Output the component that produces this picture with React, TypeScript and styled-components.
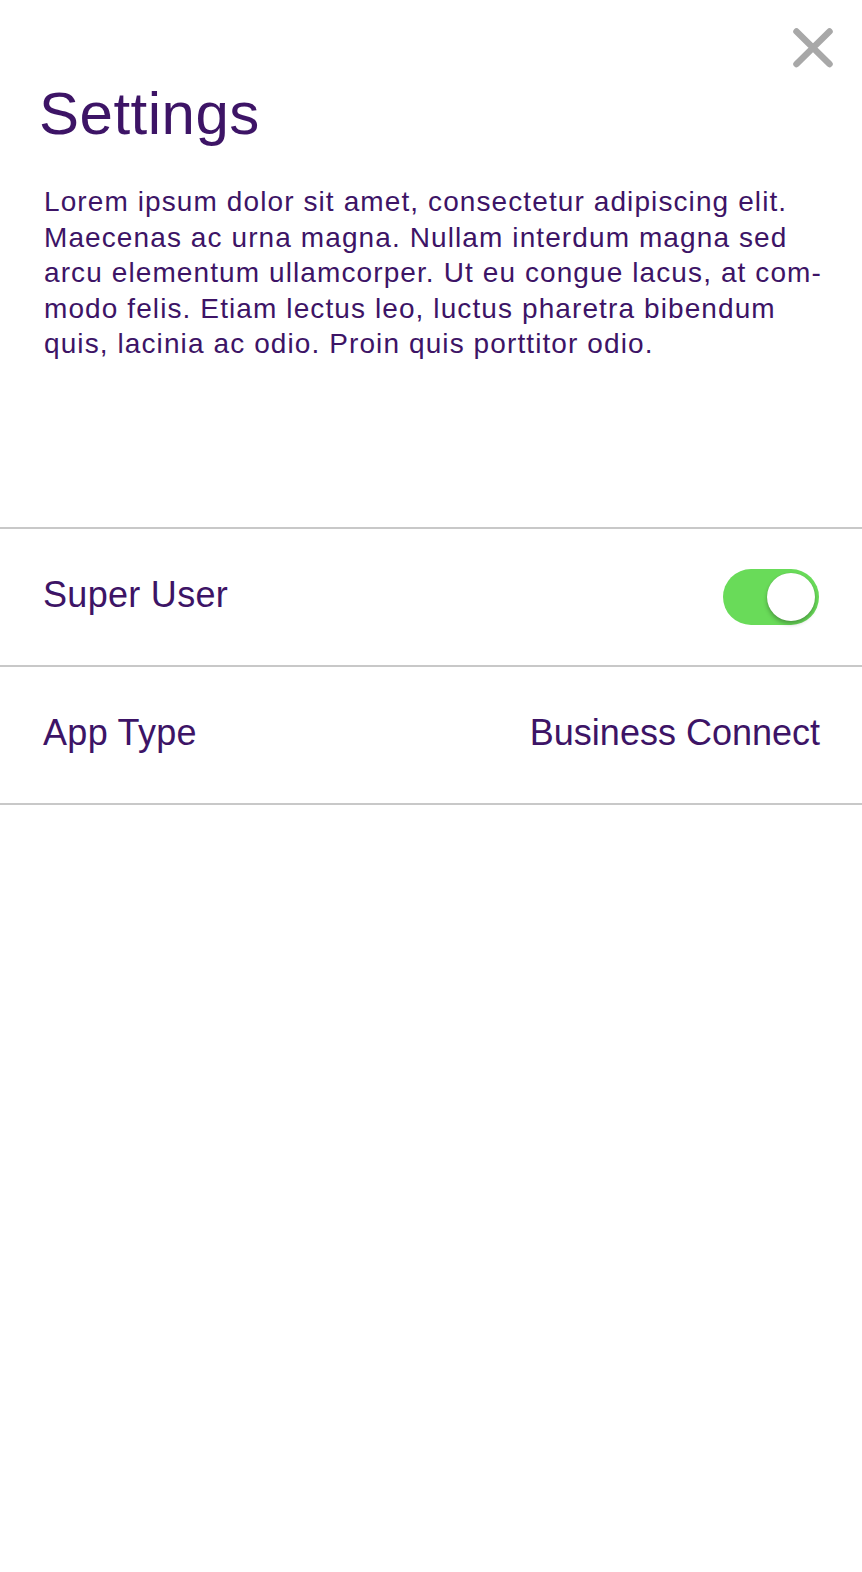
import React from "react";
import styled, { createGlobalStyle } from "styled-components";

const GlobalStyle = createGlobalStyle`
  html, body {
    margin: 0;
    padding: 0;
    background: #ffffff;
  }
  body {
    font-family: "Liberation Sans", Arial, Helvetica, sans-serif;
    color: #3d1466;
  }
`;

const StyledPage = styled.div`
  width: 100%;
  min-height: 1572px;
  background: #ffffff;
  display: flex;
  flex-direction: column;
`;

const StyledTopBar = styled.div`
  display: flex;
  justify-content: flex-end;
  padding: 28px 29px 0 0;
`;

const StyledCloseButton = styled.button`
  width: 40px;
  height: 40px;
  padding: 0;
  border: none;
  background: transparent;
  cursor: pointer;
  display: flex;
`;

const StyledTitle = styled.h1`
  margin: 16px 0 0 39px;
  font-size: 60px;
  line-height: 60px;
  font-weight: 400;
  letter-spacing: 0.5px;
  color: #3d1466;
`;

const StyledDescription = styled.p`
  margin: 40px 0 0 44px;
  font-size: 28px;
  line-height: 35.5px;
  font-weight: 400;
  letter-spacing: 1.1px;
  color: #3d1466;
`;

const StyledLine = styled.span`
  display: block;
  white-space: nowrap;
`;

const StyledList = styled.div`
  margin-top: 165px;
  border-top: 2px solid #c8c8c8;
  display: flex;
  flex-direction: column;
`;

const StyledRow = styled.div`
  height: 136px;
  border-bottom: 2px solid #c8c8c8;
  display: flex;
  align-items: center;
  justify-content: space-between;
  padding: 0 42px 0 43px;
`;

const StyledLabel = styled.span`
  font-size: 36px;
  line-height: 36px;
  padding-bottom: 4px;
  letter-spacing: 0.3px;
  color: #3d1466;
`;

const StyledValue = styled(StyledLabel)`
  text-align: right;
  letter-spacing: 0;
`;

const StyledSwitch = styled.div<{ $on: boolean }>`
  position: relative;
  width: 96px;
  height: 56px;
  border-radius: 28px;
  background: ${(p) => (p.$on ? "#69db59" : "#e5e5e5")};
  flex-shrink: 0;
  margin-right: 1px;
`;

const StyledKnob = styled.div<{ $on: boolean }>`
  position: absolute;
  top: 4px;
  left: ${(p) => (p.$on ? "44px" : "3px")};
  width: 48px;
  height: 48px;
  border-radius: 50%;
  background: #ffffff;
  box-shadow: 0 3px 4px rgba(0, 0, 0, 0.28), 0 0 1px rgba(0, 0, 0, 0.15);
`;

const CloseIcon = () => (
  <svg width="40" height="40" viewBox="0 0 40 40">
    <path
      d="M3.5 3.5 L36.5 36 M36.5 3.5 L3.5 36"
      stroke="#a8a8a8"
      strokeWidth="6.5"
      strokeLinecap="round"
      fill="none"
    />
  </svg>
);

const Switch: React.FC<{ on: boolean }> = ({ on }) => (
  <StyledSwitch $on={on}>
    <StyledKnob $on={on} />
  </StyledSwitch>
);

const lines = [
  "Lorem ipsum dolor sit amet, consectetur adipiscing elit.",
  "Maecenas ac urna magna. Nullam interdum magna sed",
  "arcu elementum ullamcorper. Ut eu congue lacus, at com-",
  "modo felis. Etiam lectus leo, luctus pharetra bibendum",
  "quis, lacinia ac odio. Proin quis porttitor odio.",
];

export default function App() {
  return (
    <>
      <GlobalStyle />
      <StyledPage>
        <StyledTopBar>
          <StyledCloseButton aria-label="Close">
            <CloseIcon />
          </StyledCloseButton>
        </StyledTopBar>
        <StyledTitle>Settings</StyledTitle>
        <StyledDescription>
          {lines.map((l) => (
            <StyledLine key={l}>{l}</StyledLine>
          ))}
        </StyledDescription>
        <StyledList>
          <StyledRow>
            <StyledLabel>Super User</StyledLabel>
            <Switch on={true} />
          </StyledRow>
          <StyledRow>
            <StyledLabel>App Type</StyledLabel>
            <StyledValue>Business Connect</StyledValue>
          </StyledRow>
        </StyledList>
      </StyledPage>
    </>
  );
}
